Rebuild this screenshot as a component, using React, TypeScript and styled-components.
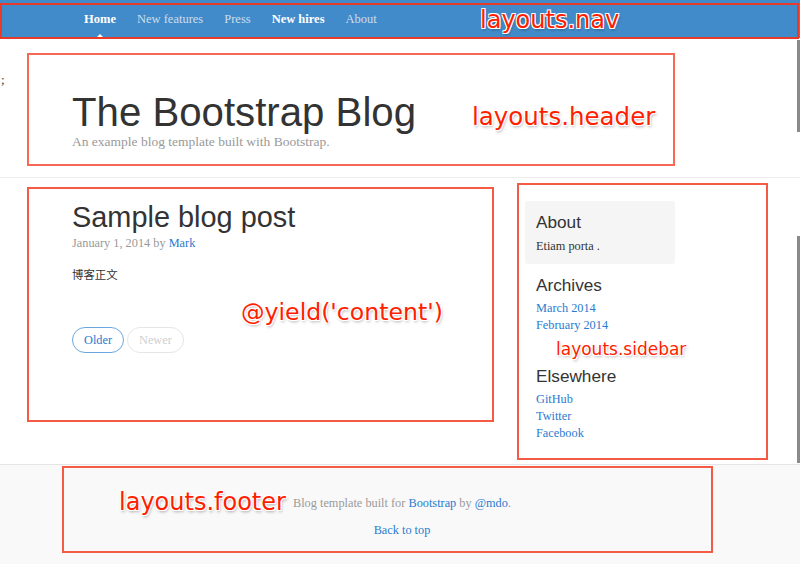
import styled, { createGlobalStyle } from 'styled-components';

const GlobalStyle = createGlobalStyle`
  html, body {
    margin: 0;
    padding: 0;
    background: #fff;
  }
  body {
    font-family: 'Liberation Serif', 'Noto Sans CJK SC', serif;
    font-size: 12.3px;
    color: #333;
    overflow: hidden;
  }
`;

const Page = styled.div`
  position: relative;
  width: 800px;
  height: 564px;
  overflow: hidden;
`;

const Nav = styled.nav`
  display: flex;
  align-items: center;
  height: 38px;
  padding-left: 73.5px;
  background-color: #428bca;
`;

const NavItem = styled.a<{ active?: boolean; bold?: boolean }>`
  position: relative;
  padding: 0 10.5px;
  line-height: 38px;
  font-size: 12.5px;
  font-weight: ${props => (props.bold ? 700 : 400)};
  color: ${props => (props.bold ? '#fff' : '#cdddeb')};
  text-decoration: none;

  &::after {
    content: '';
    display: ${props => (props.active ? 'block' : 'none')};
    position: absolute;
    left: 50%;
    bottom: 0;
    margin-left: -4px;
    border: 4px solid transparent;
    border-bottom-color: #fff;
    border-top: 0;
  }
`;

const Stray = styled.span`
  position: absolute;
  left: 1px;
  top: 72px;
  font-size: 13px;
`;

const Header = styled.header`
  padding: 55px 0 26px 72px;
  border-bottom: 1px solid #eee;
`;

const BlogTitle = styled.h1`
  margin: 0;
  font-family: 'Liberation Sans', Arial, sans-serif;
  font-weight: 400;
  font-size: 40.2px;
  line-height: 40px;
  color: #333;
`;

const Lead = styled.p`
  margin: 0;
  line-height: 18px;
  font-size: 13.5px;
  color: #999;
`;

const Body = styled.div`
  display: flex;
  height: 286px;
`;

const Main = styled.main`
  flex: 0 0 453px;
  padding: 23px 0 0 72px;
`;

const PostTitle = styled.h2`
  margin: 0;
  font-family: 'Liberation Sans', Arial, sans-serif;
  font-weight: 400;
  font-size: 28.9px;
  line-height: 32px;
  color: #333;
`;

const Meta = styled.p`
  margin: 1px 0 0;
  line-height: 18px;
  color: #999;
`;

const Text = styled.p`
  margin: 14px 0 0;
  line-height: 18px;
  font-size: 11.4px;
  color: #333;
`;

const Pager = styled.div`
  display: flex;
  gap: 3px;
  margin-top: 43px;
`;

const PagerButton = styled.span<{ disabled?: boolean }>`
  display: inline-flex;
  align-items: center;
  justify-content: center;
  box-sizing: border-box;
  height: 26px;
  padding: 0 11px;
  border-radius: 13px;
  border: 1px solid ${props => (props.disabled ? '#e6e6e6' : '#6aa7e0')};
  font-size: 12.3px;
  color: ${props => (props.disabled ? '#cfcfcf' : '#2a7bd0')};
`;

const Link = styled.a`
  color: #2a7bd0;
  text-decoration: none;
`;

const Sidebar = styled.aside`
  width: 150px;
  padding-top: 23px;
`;

const AboutBox = styled.div`
  padding: 11px 11px 9px;
  background: #f5f5f5;
  border-radius: 3px;
`;

const WidgetTitle = styled.h4<{ gap?: number }>`
  margin: ${props => props.gap ?? 0}px 0 0;
  font-family: 'Liberation Sans', Arial, sans-serif;
  font-weight: 400;
  font-size: 17.2px;
  line-height: 20px;
  color: #333;
`;

const AboutText = styled.p`
  margin: 5px 0 0;
  line-height: 18px;
`;

const Widget = styled.div`
  padding-left: 11px;
`;

const LinkList = styled.ul`
  list-style: none;
  margin: 5px 0 0;
  padding: 0;
  line-height: 17px;
`;

const Footer = styled.footer`
  height: 100px;
  padding-top: 29px;
  padding-left: 4px;
  box-sizing: border-box;
  background: #f9f9f9;
  border-top: 1px solid #e5e5e5;
  text-align: center;
  color: #999;
`;

const FooterLine = styled.p<{ gap?: number }>`
  margin: ${props => props.gap ?? 0}px 0 0;
  line-height: 18px;
`;

const Note = styled.div<{ x: number; y: number; w: number; h: number; tone: string }>`
  position: absolute;
  left: ${props => props.x}px;
  top: ${props => props.y}px;
  width: ${props => props.w}px;
  height: ${props => props.h}px;
  box-sizing: border-box;
  border: 2px solid ${props => props.tone};
  pointer-events: none;
`;

const NoteLabel = styled.span<{ x: number; y: number; size: number }>`
  position: absolute;
  left: ${props => props.x}px;
  top: ${props => props.y}px;
  font-family: 'DejaVu Sans', sans-serif;
  font-size: ${props => props.size}px;
  line-height: 1;
  white-space: nowrap;
  color: #ff1e00;
  text-shadow: -1px -1px 0 #fff, 1px -1px 0 #fff, -1px 1px 0 #fff, 1px 1px 0 #fff,
    1px 2px 3px rgba(0, 0, 0, 0.35);
`;

const ScrollStrip = styled.div<{ top: number; h: number }>`
  position: absolute;
  right: 0;
  top: ${props => props.top}px;
  width: 3px;
  height: ${props => props.h}px;
  background: #8a8a8a;
`;

const App = () => {
  return (
    <Page>
      <GlobalStyle />
      <Nav>
        <NavItem active bold>Home</NavItem>
        <NavItem>New features</NavItem>
        <NavItem>Press</NavItem>
        <NavItem bold>New hires</NavItem>
        <NavItem>About</NavItem>
      </Nav>
      <Stray>;</Stray>

      <Header>
        <BlogTitle>The Bootstrap Blog</BlogTitle>
        <Lead>An example blog template built with Bootstrap.</Lead>
      </Header>

      <Body>
        <Main>
          <PostTitle>Sample blog post</PostTitle>
          <Meta>
            January 1, 2014 by <Link>Mark</Link>
          </Meta>
          <Text>博客正文</Text>
          <Pager>
            <PagerButton>Older</PagerButton>
            <PagerButton disabled>Newer</PagerButton>
          </Pager>
        </Main>

        <Sidebar>
          <AboutBox>
            <WidgetTitle>About</WidgetTitle>
            <AboutText>Etiam porta .</AboutText>
          </AboutBox>
          <Widget>
            <WidgetTitle gap={11}>Archives</WidgetTitle>
            <LinkList>
              <li><Link>March 2014</Link></li>
              <li><Link>February 2014</Link></li>
            </LinkList>
            <WidgetTitle gap={32}>Elsewhere</WidgetTitle>
            <LinkList>
              <li><Link>GitHub</Link></li>
              <li><Link>Twitter</Link></li>
              <li><Link>Facebook</Link></li>
            </LinkList>
          </Widget>
        </Sidebar>
      </Body>

      <Footer>
        <FooterLine>
          Blog template built for <Link>Bootstrap</Link> by <Link>@mdo</Link>.
        </FooterLine>
        <FooterLine gap={9}>
          <Link>Back to top</Link>
        </FooterLine>
      </Footer>

      {/* annotations laid over the page */}
      <Note x={0} y={3} w={799} h={36} tone="#e63a2b">
        <NoteLabel x={478} y={3} size={24}>layouts.nav</NoteLabel>
      </Note>
      <Note x={27} y={53} w={648} h={113} tone="#f66a55">
        <NoteLabel x={443} y={50} size={24.5}>layouts.header</NoteLabel>
      </Note>
      <Note x={27} y={187} w={467} h={235} tone="#f55a45">
        <NoteLabel x={212} y={112} size={23.6}>@yield('content')</NoteLabel>
      </Note>
      <Note x={517} y={183} w={251} h={277} tone="#f55a45">
        <NoteLabel x={37} y={156} size={17}>layouts.sidebar</NoteLabel>
      </Note>
      <Note x={62} y={466} w={651} h={87} tone="#f55a45">
        <NoteLabel x={55} y={22} size={24}>layouts.footer</NoteLabel>
      </Note>

      <ScrollStrip top={40} h={92} />
      <ScrollStrip top={236} h={227} />
    </Page>
  );
};

export default App;
